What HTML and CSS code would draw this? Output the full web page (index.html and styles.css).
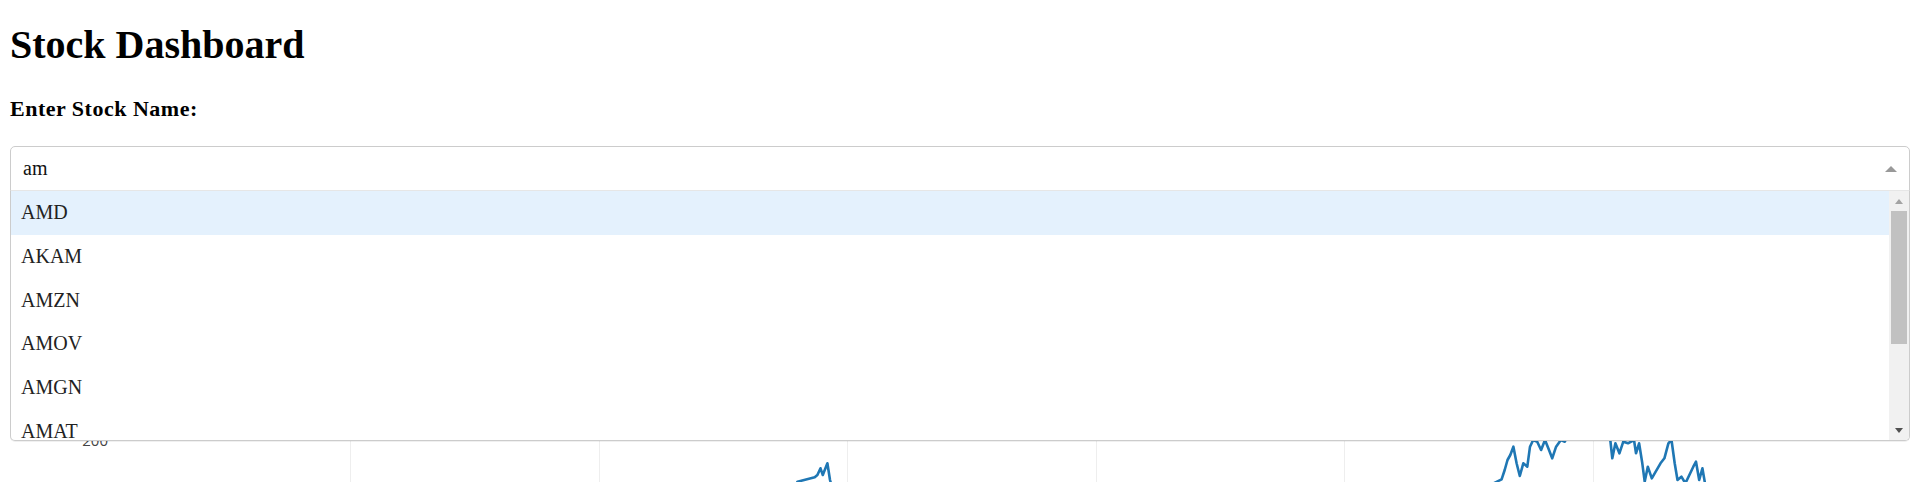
FILE: index.html
```html
<!DOCTYPE html>
<html lang="en">
<head>
<meta charset="utf-8">
<title>Stock Dashboard</title>
<link rel="stylesheet" href="styles.css">
</head>
<body>
<div class="page">
  <h1 class="title">Stock Dashboard</h1>
  <div class="label">Enter Stock Name:</div>
  <div class="select">
    <div class="control">
      <span class="value">am</span>
      <span class="arrow"></span>
    </div>
    <div class="menu">
      <div class="options">
        <div class="option focused">AMD</div>
        <div class="option">AKAM</div>
        <div class="option">AMZN</div>
        <div class="option">AMOV</div>
        <div class="option">AMGN</div>
        <div class="option">AMAT</div>
      </div>
      <div class="scrollbar">
        <div class="sb-btn"><span class="sb-up"></span></div>
        <div class="sb-track"><div class="sb-thumb"></div></div>
        <div class="sb-btn"><span class="sb-down"></span></div>
      </div>
    </div>
  </div>
  <svg class="graph" width="1900" height="291" viewBox="10 191 1900 291" xmlns="http://www.w3.org/2000/svg">
    <g class="grid">
      <line x1="350.5" y1="330" x2="350.5" y2="482"/>
      <line x1="599.5" y1="330" x2="599.5" y2="482"/>
      <line x1="847.5" y1="330" x2="847.5" y2="482"/>
      <line x1="1096.5" y1="330" x2="1096.5" y2="482"/>
      <line x1="1344.5" y1="330" x2="1344.5" y2="482"/>
      <line x1="1593.5" y1="330" x2="1593.5" y2="482"/>
    </g>
    <text class="tick" x="108" y="446" text-anchor="end">200</text>
    <polyline class="trace" points="760,520 790,495 797.5,481.7 814.7,477.3 817.4,475 820.5,468.3 822.8,475 827.4,463.3 830,480 832,486.7 840,520"/>
    <polyline class="trace" points="1480,520 1493.7,483.3 1501.6,479.3 1504.7,470 1507.5,460 1510.3,455 1513.4,446.7 1516.6,463.3 1519.8,476 1523.3,463.3 1527.3,466.7 1530,446.7 1533.2,440 1537.2,441.7 1541.1,450 1545,440 1549,450 1552.2,458.3 1556.1,446.7 1560.9,440 1564.8,441.7 1575,420 1600,425 1610.3,440 1612.3,458.3 1615.4,443.3 1619.4,453.3 1623.3,441.7 1628,443.3 1634,440 1636,453.3 1639.1,443.3 1642.3,463.3 1644.7,481.7 1647.8,466.7 1651.8,478.3 1655.7,471.7 1660.5,463.3 1664.4,458.3 1668.4,443.3 1671.5,440 1674.7,463.3 1677.5,480 1681.4,476.7 1685.4,483.3 1693.3,466.7 1696,461.7 1699.2,480 1702.4,468.3 1705,483.3 1712,520"/>
  </svg>
</div>
</body>
</html>
```

FILE: styles.css
```css
html, body {
  margin: 0;
  padding: 0;
  overflow: hidden;
  background: #ffffff;
}

body {
  font-family: "Liberation Serif", "Times New Roman", serif;
  color: #000000;
}

.page {
  padding: 0 10px;
}

.title {
  margin: 21.5px 0 0;
  font-size: 40px;
  line-height: 46px;
  font-weight: bold;
}

.label {
  margin: 28.5px 0 25px;
  font-size: 22px;
  line-height: 25px;
  font-weight: bold;
  letter-spacing: 0.5px;
}

.select {
  position: relative;
}

.control {
  display: flex;
  align-items: center;
  height: 45px;
  box-sizing: border-box;
  border: 1px solid #cccccc;
  border-radius: 5px 5px 0 0;
  padding: 0 12px;
  background: #ffffff;
}

.value {
  font-size: 20px;
  line-height: 43px;
  color: #111111;
}

.arrow {
  margin-left: auto;
  width: 0;
  height: 0;
  border-style: solid;
  border-width: 0 6px 6px 6px;
  border-color: transparent transparent #999999 transparent;
}

.menu {
  position: absolute;
  left: 0;
  right: 0;
  top: 44px;
  z-index: 2;
  display: flex;
  height: 251px;
  box-sizing: border-box;
  border: 1px solid #cccccc;
  border-top-color: #e6e6e6;
  border-radius: 0 0 5px 5px;
  box-shadow: 0 1px 0 rgba(0, 0, 0, 0.06);
  background: #ffffff;
  overflow: hidden;
}

.options {
  flex: 1;
  overflow: hidden;
}

.option {
  height: 43.75px;
  line-height: 43.75px;
  padding: 0 10px;
  font-size: 20px;
  color: #222222;
}

.option.focused {
  background: #e4f1fd;
}

.scrollbar {
  width: 20px;
  display: flex;
  flex-direction: column;
  background: #f1f1f1;
}

.sb-btn {
  height: 20px;
  display: flex;
  align-items: center;
  justify-content: center;
}

.sb-up {
  width: 0;
  height: 0;
  border-style: solid;
  border-width: 0 4.5px 5px 4.5px;
  border-color: transparent transparent #a3a3a3 transparent;
}

.sb-down {
  width: 0;
  height: 0;
  border-style: solid;
  border-width: 5px 4.5px 0 4.5px;
  border-color: #505050 transparent transparent transparent;
}

.sb-track {
  flex: 1;
  padding: 0 2px;
}

.sb-thumb {
  height: 133px;
  background: #c1c1c1;
}

.graph {
  display: block;
}

.grid line {
  stroke: #eeeeee;
  stroke-width: 1;
}

.tick {
  font-family: "Open Sans", Verdana, Arial, sans-serif;
  font-size: 15px;
  fill: #444444;
}

.trace {
  fill: none;
  stroke: #1f77b4;
  stroke-width: 2.6;
  stroke-linejoin: round;
}
```
